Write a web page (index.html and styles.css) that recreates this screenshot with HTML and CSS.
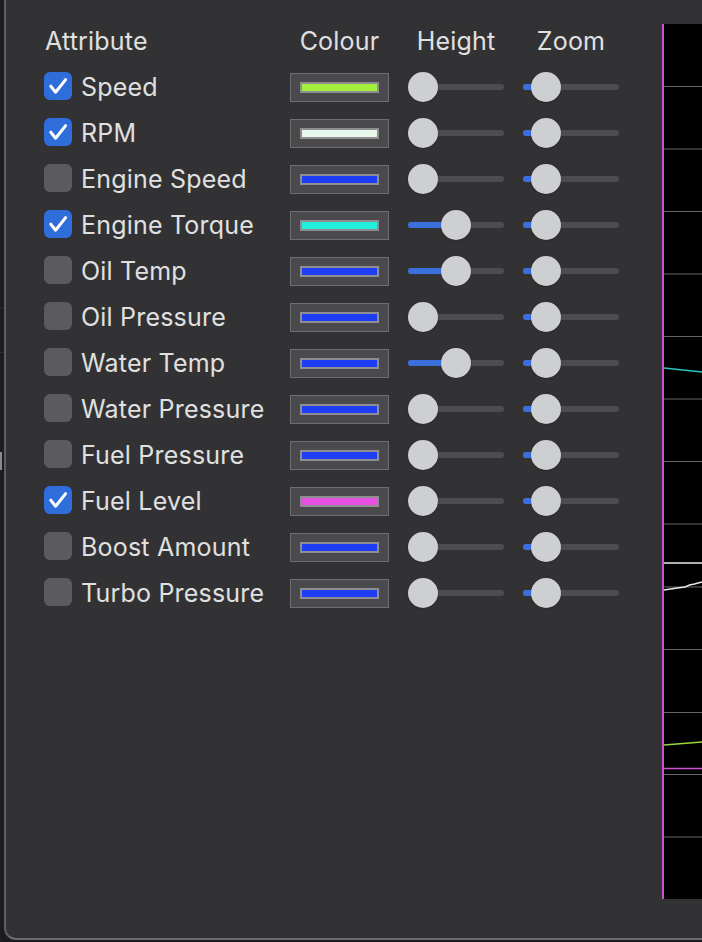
FILE: index.html
```html
<!DOCTYPE html>
<html lang="en">
<head>
<meta charset="utf-8">
<title>Attributes</title>
<link rel="stylesheet" href="styles.css">
</head>
<body>
<div class="screen">
  <div class="backdrop">
    <span class="bd-line bd-l1"></span>
    <span class="bd-line bd-l2"></span>
    <span class="bd-knob"></span>
  </div>
  <div class="window">
    <div class="attrs">
      <div class="head head-attr">Attribute</div>
      <div class="head">Colour</div>
      <div class="head">Height</div>
      <div class="head">Zoom</div>

      <label class="attr"><span class="cb on"><svg viewBox="0 0 28 28"><path d="M6.8 14.2 L11.6 20.2 L21.6 7.6"/></svg></span>Speed</label>
      <div class="swatch"><span class="bar" style="background:#a2f03c"></span></div>
      <div class="slider" style="--v:0"><span class="track"></span><span class="fill"></span><span class="knob"></span></div>
      <div class="slider" style="--v:0.12"><span class="track"></span><span class="fill"></span><span class="knob"></span></div>

      <label class="attr"><span class="cb on"><svg viewBox="0 0 28 28"><path d="M6.8 14.2 L11.6 20.2 L21.6 7.6"/></svg></span>RPM</label>
      <div class="swatch"><span class="bar" style="background:#e8f8ea"></span></div>
      <div class="slider" style="--v:0"><span class="track"></span><span class="fill"></span><span class="knob"></span></div>
      <div class="slider" style="--v:0.12"><span class="track"></span><span class="fill"></span><span class="knob"></span></div>

      <label class="attr"><span class="cb"></span>Engine Speed</label>
      <div class="swatch"><span class="bar" style="background:#1e3ef6"></span></div>
      <div class="slider" style="--v:0"><span class="track"></span><span class="fill"></span><span class="knob"></span></div>
      <div class="slider" style="--v:0.12"><span class="track"></span><span class="fill"></span><span class="knob"></span></div>

      <label class="attr"><span class="cb on"><svg viewBox="0 0 28 28"><path d="M6.8 14.2 L11.6 20.2 L21.6 7.6"/></svg></span>Engine Torque</label>
      <div class="swatch"><span class="bar" style="background:#22f0dc"></span></div>
      <div class="slider" style="--v:0.5"><span class="track"></span><span class="fill"></span><span class="knob"></span></div>
      <div class="slider" style="--v:0.12"><span class="track"></span><span class="fill"></span><span class="knob"></span></div>

      <label class="attr"><span class="cb"></span>Oil Temp</label>
      <div class="swatch"><span class="bar" style="background:#1e3ef6"></span></div>
      <div class="slider" style="--v:0.5"><span class="track"></span><span class="fill"></span><span class="knob"></span></div>
      <div class="slider" style="--v:0.12"><span class="track"></span><span class="fill"></span><span class="knob"></span></div>

      <label class="attr"><span class="cb"></span>Oil Pressure</label>
      <div class="swatch"><span class="bar" style="background:#1e3ef6"></span></div>
      <div class="slider" style="--v:0"><span class="track"></span><span class="fill"></span><span class="knob"></span></div>
      <div class="slider" style="--v:0.12"><span class="track"></span><span class="fill"></span><span class="knob"></span></div>

      <label class="attr"><span class="cb"></span>Water Temp</label>
      <div class="swatch"><span class="bar" style="background:#1e3ef6"></span></div>
      <div class="slider" style="--v:0.5"><span class="track"></span><span class="fill"></span><span class="knob"></span></div>
      <div class="slider" style="--v:0.12"><span class="track"></span><span class="fill"></span><span class="knob"></span></div>

      <label class="attr"><span class="cb"></span>Water Pressure</label>
      <div class="swatch"><span class="bar" style="background:#1e3ef6"></span></div>
      <div class="slider" style="--v:0"><span class="track"></span><span class="fill"></span><span class="knob"></span></div>
      <div class="slider" style="--v:0.12"><span class="track"></span><span class="fill"></span><span class="knob"></span></div>

      <label class="attr"><span class="cb"></span>Fuel Pressure</label>
      <div class="swatch"><span class="bar" style="background:#1e3ef6"></span></div>
      <div class="slider" style="--v:0"><span class="track"></span><span class="fill"></span><span class="knob"></span></div>
      <div class="slider" style="--v:0.12"><span class="track"></span><span class="fill"></span><span class="knob"></span></div>

      <label class="attr"><span class="cb on"><svg viewBox="0 0 28 28"><path d="M6.8 14.2 L11.6 20.2 L21.6 7.6"/></svg></span>Fuel Level</label>
      <div class="swatch"><span class="bar" style="background:#e650e0"></span></div>
      <div class="slider" style="--v:0"><span class="track"></span><span class="fill"></span><span class="knob"></span></div>
      <div class="slider" style="--v:0.12"><span class="track"></span><span class="fill"></span><span class="knob"></span></div>

      <label class="attr"><span class="cb"></span>Boost Amount</label>
      <div class="swatch"><span class="bar" style="background:#1e3ef6"></span></div>
      <div class="slider" style="--v:0"><span class="track"></span><span class="fill"></span><span class="knob"></span></div>
      <div class="slider" style="--v:0.12"><span class="track"></span><span class="fill"></span><span class="knob"></span></div>

      <label class="attr"><span class="cb"></span>Turbo Pressure</label>
      <div class="swatch"><span class="bar" style="background:#1e3ef6"></span></div>
      <div class="slider" style="--v:0"><span class="track"></span><span class="fill"></span><span class="knob"></span></div>
      <div class="slider" style="--v:0.12"><span class="track"></span><span class="fill"></span><span class="knob"></span></div>
    </div>

    <div class="chart">
      <svg class="plot" viewBox="0 0 40 875" preserveAspectRatio="none">
        <g class="grid">
          <line x1="0" y1="62.5" x2="40" y2="62.5"/>
          <line x1="0" y1="125" x2="40" y2="125"/>
          <line x1="0" y1="187.5" x2="40" y2="187.5"/>
          <line x1="0" y1="250" x2="40" y2="250"/>
          <line x1="0" y1="312.5" x2="40" y2="312.5"/>
          <line x1="0" y1="375" x2="40" y2="375"/>
          <line x1="0" y1="437.5" x2="40" y2="437.5"/>
          <line x1="0" y1="500" x2="40" y2="500"/>
          <line x1="0" y1="563" x2="40" y2="563"/>
          <line x1="0" y1="625.5" x2="40" y2="625.5"/>
          <line x1="0" y1="688.5" x2="40" y2="688.5"/>
          <line x1="0" y1="750.5" x2="40" y2="750.5"/>
          <line x1="0" y1="813" x2="40" y2="813"/>
        </g>
        <polyline class="d-cyan" points="0,344 40,348"/>
        <polyline class="d-white" points="0,539 40,539"/>
        <polyline class="d-white" points="0,566 14,564 22,563 27,561 32,560 40,558"/>
        <polyline class="d-green" points="0,721 40,718"/>
        <polyline class="d-magenta" points="0,744.5 40,744.5"/>
      </svg>
    </div>
  </div>
</div>
</body>
</html>
```
FILE: styles.css
```css
html, body {
  margin: 0;
  padding: 0;
}

body {
  width: 702px;
  height: 942px;
  overflow: hidden;
  background: #1c1c1e;
  font-family: "Inter", "Noto Sans", "Liberation Sans", sans-serif;
  color: #e0e0e0;
}

.screen {
  display: flex;
  height: 942px;
}

.backdrop {
  position: relative;
  width: 4px;
  flex: none;
  background: #1d1d1f;
}

.bd-line {
  position: absolute;
  left: 0;
  width: 4px;
  height: 1px;
  background: #2c2c2e;
}

.bd-l1 { top: 308px; }
.bd-l2 { top: 352px; }

.bd-knob {
  position: absolute;
  left: 0;
  top: 452px;
  width: 2px;
  height: 18px;
  background: #8a8a8c;
}

.window {
  flex: 1;
  display: flex;
  align-items: flex-start;
  box-sizing: border-box;
  height: 940px;
  padding-left: 38px;
  background: #323234;
  border-left: 2px solid #5f5f61;
  border-bottom: 2px solid #6c6c6e;
  border-bottom-left-radius: 12px;
}

.attrs {
  display: grid;
  grid-template-columns: 227px 99px 96px 96px;
  grid-auto-rows: 46px;
  column-gap: 19px;
  align-items: center;
  padding-top: 18px;
  font-size: 25px;
  letter-spacing: 0.2px;
  line-height: 28px;
}

.head {
  justify-self: center;
}

.head-attr {
  justify-self: start;
  margin-left: 1px;
}

.attr {
  display: flex;
  align-items: center;
  gap: 9px;
  white-space: nowrap;
}

.cb {
  flex: none;
  width: 28px;
  height: 28px;
  box-sizing: border-box;
  border-radius: 6px;
  background: #5b5b5d;
  margin-top: -2px;
}

.cb.on {
  background: #2f6ddb;
}

.cb svg {
  display: block;
  width: 28px;
  height: 28px;
  fill: none;
  stroke: #ffffff;
  stroke-width: 3;
  stroke-linecap: round;
  stroke-linejoin: round;
}

.swatch {
  box-sizing: border-box;
  width: 99px;
  height: 29px;
  padding: 8px 9px;
  background: #4a4a4c;
  border: 1px solid #6e6e70;
}

.bar {
  display: block;
  box-sizing: border-box;
  height: 11px;
  border: 2px solid #8e8e90;
}

.slider {
  position: relative;
  width: 96px;
  height: 30px;
}

.track,
.fill {
  position: absolute;
  left: 0;
  top: 12px;
  height: 6px;
  border-radius: 3px;
}

.track {
  right: 0;
  background: #4d4d4f;
}

.fill {
  width: calc(15px + var(--v) * (100% - 30px));
  background: #3a70dc;
}

.knob {
  position: absolute;
  top: 0;
  left: calc(var(--v) * (100% - 30px));
  width: 30px;
  height: 30px;
  border-radius: 50%;
  background: #cecfd1;
  box-shadow: 0 0.5px 1.5px rgba(0, 0, 0, 0.35);
}

.chart {
  flex: 1;
  margin-left: 43px;
  margin-top: 24px;
  height: 875px;
  background: #000000;
  border-left: 2px solid #d050d0;
  overflow: hidden;
}

.plot {
  display: block;
  width: 100%;
  height: 875px;
}

.grid line {
  stroke: #6a6a6a;
  stroke-width: 1;
}

.plot polyline {
  fill: none;
  stroke-width: 1.5;
}

.d-cyan { stroke: #2cc6c0; }
.d-white { stroke: #e6ece6; }
.d-green { stroke: #98d83c; }
.d-magenta { stroke: #d050d0; }
```
